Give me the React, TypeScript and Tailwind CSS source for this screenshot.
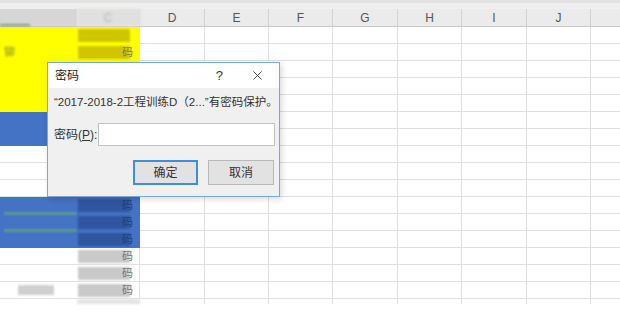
import { X } from 'lucide-react';

const COLS = [
	{ key: 'B', w: 77 },
	{ key: 'C', w: 63 },
	{ key: 'D', w: 65 },
	{ key: 'E', w: 64 },
	{ key: 'F', w: 64 },
	{ key: 'G', w: 65 },
	{ key: 'H', w: 64 },
	{ key: 'I', w: 65 },
	{ key: 'J', w: 64 },
	{ key: '', w: 40 }
];

type Fill = 'yellow' | 'blue' | 'white';

const ROWS: { fill: Fill; a?: string; c?: string }[] = [
	{ fill: 'yellow', c: 'block' },
	{ fill: 'yellow', a: '铆', c: '已加密数码' },
	{ fill: 'yellow' },
	{ fill: 'yellow' },
	{ fill: 'yellow' },
	{ fill: 'blue' },
	{ fill: 'blue' },
	{ fill: 'white' },
	{ fill: 'white' },
	{ fill: 'white' },
	{ fill: 'blue', c: '数码' },
	{ fill: 'blue', c: '码' },
	{ fill: 'blue', c: '码' },
	{ fill: 'white', c: '码' },
	{ fill: 'white', c: '码' },
	{ fill: 'white', c: '码' }
];

const fillClass: Record<Fill, string> = {
	yellow: 'bg-[#ffff00] border-[#ffff00]',
	blue: 'bg-[#4472c4] border-[#4472c4]',
	white: 'bg-white border-[#e2e2e2]'
};

const blockClass: Record<Fill, string> = {
	yellow: 'bg-[#cfc600]',
	blue: 'bg-[#2f559e]',
	white: 'bg-[#c9c9c9]'
};

const HeaderRow = () => (
	<div className="flex h-[18px] border-b border-[#c8c8c8] bg-[#ebebeb]">
		{COLS.map((col, i) => (
			<div
				key={i}
				className={
					i === 0
						? 'relative shrink-0 bg-[#d6d6d6]'
						: i === 1
							? 'flex shrink-0 items-center justify-center border-r border-[#d2d2d2] bg-[#e0e0de] text-[12px] text-[#b0b0b0] blur-[1.5px]'
							: 'flex shrink-0 items-center justify-center border-r border-[#d2d2d2] text-[12px] text-[#555]'
				}
				style={{ width: col.w }}
			>
				{i === 0 ? (
					<div className="absolute bottom-0 left-0 h-[2px] w-[30px] bg-[#7aa07a] blur-[1px]" />
				) : (
					col.key
				)}
			</div>
		))}
	</div>
);

const SheetRow = ({ row, index }: { row: (typeof ROWS)[number]; index: number }) => (
	<div className="flex h-[17px]">
		<div
			className={`flex shrink-0 items-center border-b pl-1 ${fillClass[row.fill]}`}
			style={{ width: COLS[0].w }}
		>
			{row.a && <span className="text-[11px] text-[#8a8a30] blur-[1px]">{row.a}</span>}
			{row.fill === 'blue' && index >= 10 && index <= 11 && (
				<div className="mt-[16px] h-[3px] w-full bg-[#5f9a8e] blur-[1px]" />
			)}
			{row.fill === 'white' && index === 15 && (
				<div className="ml-[14px] h-[10px] w-[36px] bg-[#cfcfcf] blur-[1px]" />
			)}
		</div>
		<div
			className={`relative flex shrink-0 items-center border-r border-b ${fillClass[row.fill]}`}
			style={{ width: COLS[1].w }}
		>
			{row.c !== undefined && (
				<div className={`ml-px h-[13px] w-[52px] blur-[1px] ${blockClass[row.fill]}`} />
			)}
			{row.c && row.c !== 'block' && (
				<span
					className={`absolute right-[6px] text-[11px] ${row.fill === 'blue' ? 'text-[#1f3f80]' : 'text-[#777]'}`}
				>
					{row.c.slice(-1)}
				</span>
			)}
		</div>
		{COLS.slice(2).map((col, i) => (
			<div
				key={i}
				className="shrink-0 border-r border-b border-[#e0e0e0] bg-white"
				style={{ width: col.w }}
			/>
		))}
	</div>
);

const TailRow = () => (
	<div className="flex h-[5px]">
		<div className="shrink-0" style={{ width: COLS[0].w }} />
		{COLS.slice(1).map((col, i) => (
			<div
				key={i}
				className={`shrink-0 border-r border-[#e0e0e0] ${i === 0 ? 'bg-[#e4e4e4] blur-[1px]' : ''}`}
				style={{ width: col.w }}
			/>
		))}
	</div>
);

const PasswordDialog = () => (
	<div className="absolute top-[62px] left-[47px] flex h-[135px] w-[233px] flex-col border border-[#7aa7d9] bg-[#f0f0f0] shadow-[2px_2px_6px_rgba(0,0,0,0.15)]">
		<div className="flex h-[25px] items-center bg-white pl-[7px] text-[12px] text-[#222]">
			<span className="flex-1">密码</span>
			<span className="mr-[27px] text-[13px] text-[#333]">?</span>
			<X className="mr-[14px] text-[#333]" size={15} strokeWidth={1.4} />
		</div>
		<div className="pt-[6px] pl-[6px] text-[11.5px] whitespace-nowrap text-[#333]">
			“2017-2018-2工程训练D（2...”有密码保护。
		</div>
		<div className="mt-[12px] flex items-center pl-[6px] text-[12px] text-[#333]">
			<span className="w-[44px]">
				密码(<span className="underline">P</span>):
			</span>
			<div className="h-[23px] w-[177px] border border-[#c2c2c2] bg-white" />
		</div>
		<div className="mt-[14px] flex justify-end gap-[10px] pr-[5px] text-[12px] text-[#333]">
			<button className="h-[25px] w-[65px] border-2 border-[#3c8fdc] bg-[#e2e2e2]">确定</button>
			<button className="h-[25px] w-[66px] border border-[#b8b8b8] bg-[#e2e2e2]">取消</button>
		</div>
	</div>
);

export default function App() {
	return (
		<div
			className="relative h-[312px] w-[620px] overflow-hidden bg-white"
			style={{ fontFamily: '"Liberation Sans", "Noto Sans CJK SC", sans-serif' }}
		>
			<div className="h-[9px] border-t-[3px] border-[#e2e2e2] bg-[#efefef]" />
			<HeaderRow />
			{ROWS.map((row, i) => (
				<SheetRow key={i} row={row} index={i} />
			))}
			<TailRow />
			<PasswordDialog />
		</div>
	);
}
